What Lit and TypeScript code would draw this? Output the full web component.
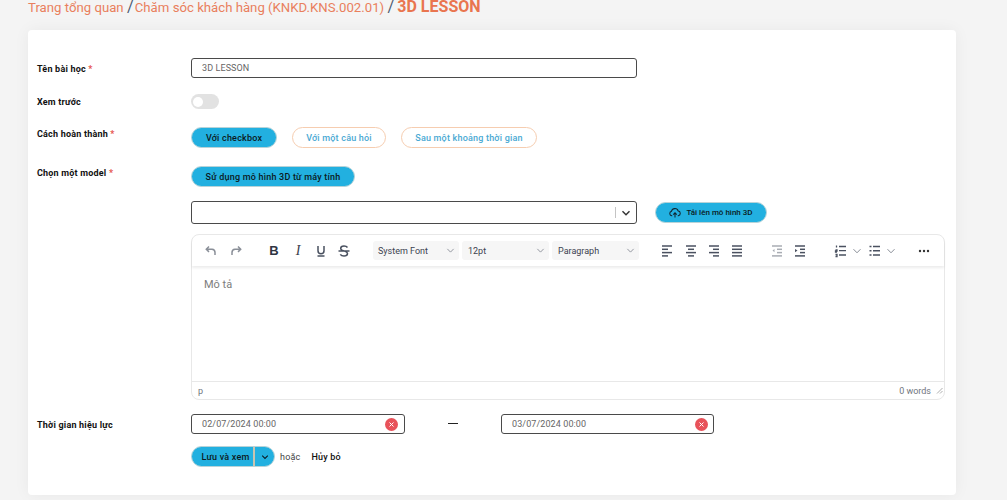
import { LitElement, html, css, svg } from "lit";
import { customElement } from "lit/decorators.js";

const chevron = (size: number, color: string, sw = 1.2) => html`
  <svg width=${size} height=${size} viewBox="0 0 10 10" fill="none" stroke=${color} stroke-width=${sw}>
    <path d="M1.5 3.2 5 6.8l3.5-3.6" />
  </svg>`;

const tbIcon = (body: unknown, color = "#4a5160") => html`
  <svg class="ti" width="14" height="14" viewBox="0 0 14 14" fill="none" stroke=${color} stroke-width="1.5">${body}</svg>`;

const lines = (rows: [number, number][]) =>
  rows.map(([a, b], i) => svg`<path d=${`M${a} ${2 + i * 3.3}H${b}`} />`);

@customElement("app-root")
export class AppRoot extends LitElement {
  static styles = css`
    :host {
      display: block;
      height: 500px;
      overflow: hidden;
      background: #f4f4f4;
      font-family: Roboto, "Liberation Sans", sans-serif;
      font-size: 9px;
      color: #111;
    }
    .crumbs {
      height: 32px;
      margin-top: -2px;
      padding-left: 28px;
      font-size: 13.2px;
      line-height: 18px;
      color: #e97f5d;
      white-space: nowrap;
    }
    .crumbs .sep { color: #4c5a70; font-size: 16px; }
    .crumbs .sep.first { margin-right: -2px; }
    .crumbs b { font-weight: 700; font-size: 16px; color: #e9754f; }
    .card {
      width: 928px;
      height: 465px;
      margin-left: 28px;
      box-sizing: border-box;
      padding: 28px 10px 0 9px;
      background: #fff;
      border-radius: 4px;
      box-shadow: 0 0 16px rgba(0, 0, 0, 0.05);
    }
    .row { display: flex; align-items: flex-start; }
    .label {
      flex: 0 0 154px;
      font-weight: 700;
      font-size: 9px;
      color: #111;
      letter-spacing: 0.2px;
    }
    .label i { color: #e5534b; font-style: normal; }
    .field {
      box-sizing: border-box;
      height: 20px;
      border: 1px solid #4a4a4a;
      border-radius: 3px;
      padding-left: 10px;
      display: flex;
      align-items: center;
      color: #666;
      font-size: 9px;
      letter-spacing: 0.1px;
    }
    .name { width: 446px; }
    .r-name { height: 36px; }
    .r-name .label { padding-top: 6px; }
    .r-preview { height: 33px; }
    .r-preview .label { padding-top: 3px; }
    .toggle {
      width: 28px;
      height: 15px;
      border-radius: 8px;
      background: #e2e2e2;
      position: relative;
    }
    .toggle::after {
      content: "";
      position: absolute;
      left: 2px;
      top: 2.5px;
      width: 10px;
      height: 10px;
      border-radius: 50%;
      background: #fff;
    }
    .r-how { height: 39px; }
    .r-how .label { padding-top: 2px; }
    .btns { display: flex; gap: 15px; }
    .pill {
      box-sizing: border-box;
      height: 21px;
      border-radius: 11px;
      display: flex;
      align-items: center;
      justify-content: center;
      font-weight: 500;
      font-size: 9px;
      letter-spacing: 0.2px;
    }
    .solid {
      background: #22b0e0;
      border: 1px solid #b8d3d8;
      color: #0b1a22;
    }
    .outline {
      background: #fff;
      border: 1px solid #f6cdb0;
      color: #4aa9d3;
    }
    .r-model { height: 35px; }
    .r-model .label { padding-top: 2px; }
    .r-select { height: 33px; padding-left: 154px; gap: 18px; align-items: flex-start; }
    .select {
      box-sizing: border-box;
      width: 446px;
      height: 23px;
      border: 1px solid #4a4a4a;
      border-radius: 3px;
      display: flex;
      justify-content: flex-end;
      align-items: center;
    }
    .select .bar { width: 1px; height: 11px; background: #c4c4c4; margin-right: 5px; }
    .select svg { margin-right: 5px; }
    .upload { width: 112px; gap: 5px; height: 21px; margin-top: 1px; font-size: 8px; letter-spacing: 0; }
    .editor {
      box-sizing: border-box;
      margin-left: 154px;
      width: 754px;
      height: 166px;
      border: 1px solid #e8e8e8;
      border-radius: 8px;
      display: flex;
      flex-direction: column;
      margin-bottom: 14px;
    }
    .toolbar {
      height: 31px;
      flex: none;
      display: flex;
      align-items: center;
      padding-left: 6px;
      box-shadow: 0 2px 3px rgba(0, 0, 0, 0.08);
      border-radius: 8px 8px 0 0;
      position: relative;
    }
    .toolbar > * { flex: none; }
    .ti { display: block; }
    .tb { width: 25px; display: flex; justify-content: center; font-size: 13px; }
    .left { justify-content: flex-start; }
    .sel {
      box-sizing: border-box;
      height: 19px;
      background: #f6f6f6;
      border-radius: 3px;
      display: flex;
      align-items: center;
      justify-content: space-between;
      padding: 0 4px 0 6px;
      margin-right: 3px;
      color: #3c4250;
      font-size: 9px;
    }
    .sel.first { padding-left: 5px; }
    .body {
      flex: 1;
      padding: 12px 12px;
      font-size: 11px;
      color: #7d7d7d;
    }
    .status {
      height: 17px;
      flex: none;
      border-top: 1px solid #e8e8e8;
      display: flex;
      align-items: center;
      justify-content: space-between;
      padding: 0 1px 0 6px;
      color: #70757e;
      font-size: 9px;
    }
    .status .right { display: flex; align-items: center; gap: 5px; }
    .r-date { height: 32px; }
    .r-date .label { padding-top: 6px; }
    .date { width: 214px; justify-content: space-between; padding-right: 6px; }
    .date2 { width: 213px; padding-right: 5px; }
    .dash {
      width: 96px;
      display: flex;
      justify-content: center;
      padding-top: 9px;
    }
    .dash span { width: 10px; height: 1.2px; background: #222; display: block; }
    .clear {
      width: 13px;
      height: 13px;
      border-radius: 50%;
      background: #e8525a;
      display: flex;
      align-items: center;
      justify-content: center;
    }
    .r-save { padding-left: 154px; align-items: center; }
    .save {
      display: flex;
      height: 21px;
      width: 84px;
      border-radius: 11px;
      border: 1px solid #b8d3d8;
      box-sizing: border-box;
      overflow: hidden;
      background: #22b0e0;
      color: #0b1a22;
      font-weight: 500;
      font-size: 9px;
      letter-spacing: 0.2px;
    }
    .save .main {
      width: 63px;
      display: flex;
      align-items: center;
      justify-content: center;
      border-right: 2px solid #c9c4b0;
      padding-left: 6px;
      box-sizing: border-box;
    }
    .save .drop { flex: 1; display: flex; align-items: center; justify-content: center; }
    .or { margin-left: 5px; color: #444; letter-spacing: 0.2px; }
    .cancel { margin-left: 11px; color: #111; font-weight: 500; letter-spacing: 0.2px; }
  `;

  render() {
    const x = html`<svg width="7" height="7" viewBox="0 0 7 7" stroke="#fff" stroke-width="1"><path d="M1.5 1.5l4 4M5.500 1.500l-4 4" /></svg>`;
    return html`
      <div class="crumbs">Trang tổng quan <span class="sep first">/</span> Chăm sóc khách hàng (KNKD.KNS.002.01) <span class="sep">/</span> <b>3D LESSON</b></div>
      <div class="card">
        <div class="row r-name">
          <div class="label">Tên bài học <i>*</i></div>
          <div class="field name">3D LESSON</div>
        </div>
        <div class="row r-preview">
          <div class="label">Xem trước</div>
          <div class="toggle"></div>
        </div>
        <div class="row r-how">
          <div class="label">Cách hoàn thành <i>*</i></div>
          <div class="btns">
            <div class="pill solid" style="width:86px">Với checkbox</div>
            <div class="pill outline" style="width:94px">Với một câu hỏi</div>
            <div class="pill outline" style="width:136px">Sau một khoảng thời gian</div>
          </div>
        </div>
        <div class="row r-model">
          <div class="label">Chọn một model <i>*</i></div>
          <div class="pill solid" style="width:164px">Sử dụng mô hình 3D từ máy tính</div>
        </div>
        <div class="row r-select">
          <div class="select"><span class="bar"></span>${chevron(10, "#333", 1.4)}</div>
          <div class="pill solid upload">
            <svg width="12" height="12" viewBox="0 0 13 13" fill="none" stroke="#10222c" stroke-width="1.1">
              <path d="M3.500 9.500H3a2.500 2.500 0 0 1-.3-4.900A3.800 3.800 0 0 1 10 4.400a2.600 2.600 0 0 1 .2 5.100h-.7" />
              <path d="M6.500 11.500V6.500M4.600 8.200l1.900-1.900 1.900 1.900" />
            </svg>
            Tải lên mô hình 3D
          </div>
        </div>
        <div class="editor">
          <div class="toolbar">
            <span class="tb">${tbIcon(svg`<path d="M5 2.500 2.300 5.200 5 7.900M2.500 5.200h5.500a3.200 3.200 0 0 1 3 3.300V11" />`, "#8a8f98")}</span>
            <span class="tb">${tbIcon(svg`<path d="M9 2.500l2.700 2.700L9 7.900M11.500 5.200H6a3.200 3.200 0 0 0-3 3.300V11" />`, "#8a8f98")}</span>
            <span style="width:14px"></span>
            <span class="tb" style="font-weight:700;color:#2f3542;width:24px;font-family:'Liberation Sans',sans-serif">B</span>
            <span class="tb" style="font-style:italic;color:#3a404c;width:24px;font-family:'Liberation Serif',serif;font-size:14px">I</span>
            <span class="tb" style="width:22px">${tbIcon(svg`<path d="M4 2v4.800a3 3 0 0 0 6 0V2M3.500 12h7" />`)}</span>
            <span class="tb" style="width:23px">${tbIcon(svg`<path d="M10.500 3.500C9.800 2.500 8.500 2 7 2 5 2 3.700 3 3.700 4.400c0 3 6.800 2 6.800 5.200 0 1.500-1.500 2.400-3.500 2.400-1.600 0-3-.6-3.700-1.700M1.500 7h11" />`)}</span>
            <span style="width:18px"></span>
            <div class="sel first" style="width:86px">System Font ${chevron(9, "#8a8f98", 1)}</div>
            <div class="sel" style="width:87px">12pt ${chevron(9, "#8a8f98", 1)}</div>
            <div class="sel" style="width:87px;margin-right:0">Paragraph ${chevron(9, "#8a8f98", 1)}</div>
            <span style="width:21px"></span>
            <span class="tb left" style="width:24px">${tbIcon(lines([[2, 12], [2, 8], [2, 12], [2, 8]]))}</span>
            <span class="tb left" style="width:23px">${tbIcon(lines([[2, 12], [4, 10], [2, 12], [4, 10]]))}</span>
            <span class="tb left" style="width:23px">${tbIcon(lines([[2, 12], [6, 12], [2, 12], [6, 12]]))}</span>
            <span class="tb left" style="width:40px">${tbIcon(lines([[2, 12], [2, 12], [2, 12], [2, 12]]))}</span>
            <span class="tb left" style="width:23px">${tbIcon(svg`${lines([[2, 12], [7, 12], [7, 12], [2, 12]])}<path d="M4.500 5 2.500 6.600l2 1.600" fill="#a8acb3" stroke="none"/>`, "#a8acb3")}</span>
            <span class="tb left" style="width:41px">${tbIcon(svg`${lines([[2, 12], [7, 12], [7, 12], [2, 12]])}<path d="M2 5l2.500 1.600L2 8.200" fill="#4a5160" stroke="none"/>`)}</span>
            <span class="tb left" style="width:18px">${tbIcon(svg`<path d="M5 2.500h7M5 6.700h7M5 11h7M2.500 1.500v2M1.500 6h1.500v1h-1.500v1h1.500M1.500 10.500H3v2H1.500" stroke-width="1.300"/>`)}</span>
            <span style="display:flex;width:16px">${chevron(10, "#8a8f98", 1)}</span>
            <span class="tb left" style="width:18px">${tbIcon(svg`<path d="M5 2.500h7M5 6.700h7M5 11h7M1.500 2.500h2M1.500 6.700h2M1.500 11h2" stroke-width="1.600"/>`)}</span>
            <span style="display:flex;width:32px">${chevron(10, "#8a8f98", 1)}</span>
            <svg width="12" height="4" viewBox="0 0 12 4" fill="#333"><circle cx="2" cy="2" r="1.200"/><circle cx="6" cy="2" r="1.200"/><circle cx="10" cy="2" r="1.200"/></svg>
          </div>
          <div class="body">Mô tả</div>
          <div class="status">
            <span>p</span>
            <span class="right">0 words
              <svg width="7" height="7" viewBox="0 0 7 7" stroke="#999" stroke-width="0.8"><path d="M1 6.500 6.500 1M4 6.500 6.500 4" /></svg>
            </span>
          </div>
        </div>
        <div class="row r-date">
          <div class="label">Thời gian hiệu lực</div>
          <div class="field date">02/07/2024 00:00 <span class="clear">${x}</span></div>
          <div class="dash"><span></span></div>
          <div class="field date date2">03/07/2024 00:00 <span class="clear">${x}</span></div>
        </div>
        <div class="row r-save">
          <div class="save">
            <span class="main">Lưu và xem</span>
            <span class="drop">${chevron(8, "#0b1a22", 1.3)}</span>
          </div>
          <span class="or">hoặc</span>
          <span class="cancel">Hủy bỏ</span>
        </div>
      </div>
    `;
  }
}
